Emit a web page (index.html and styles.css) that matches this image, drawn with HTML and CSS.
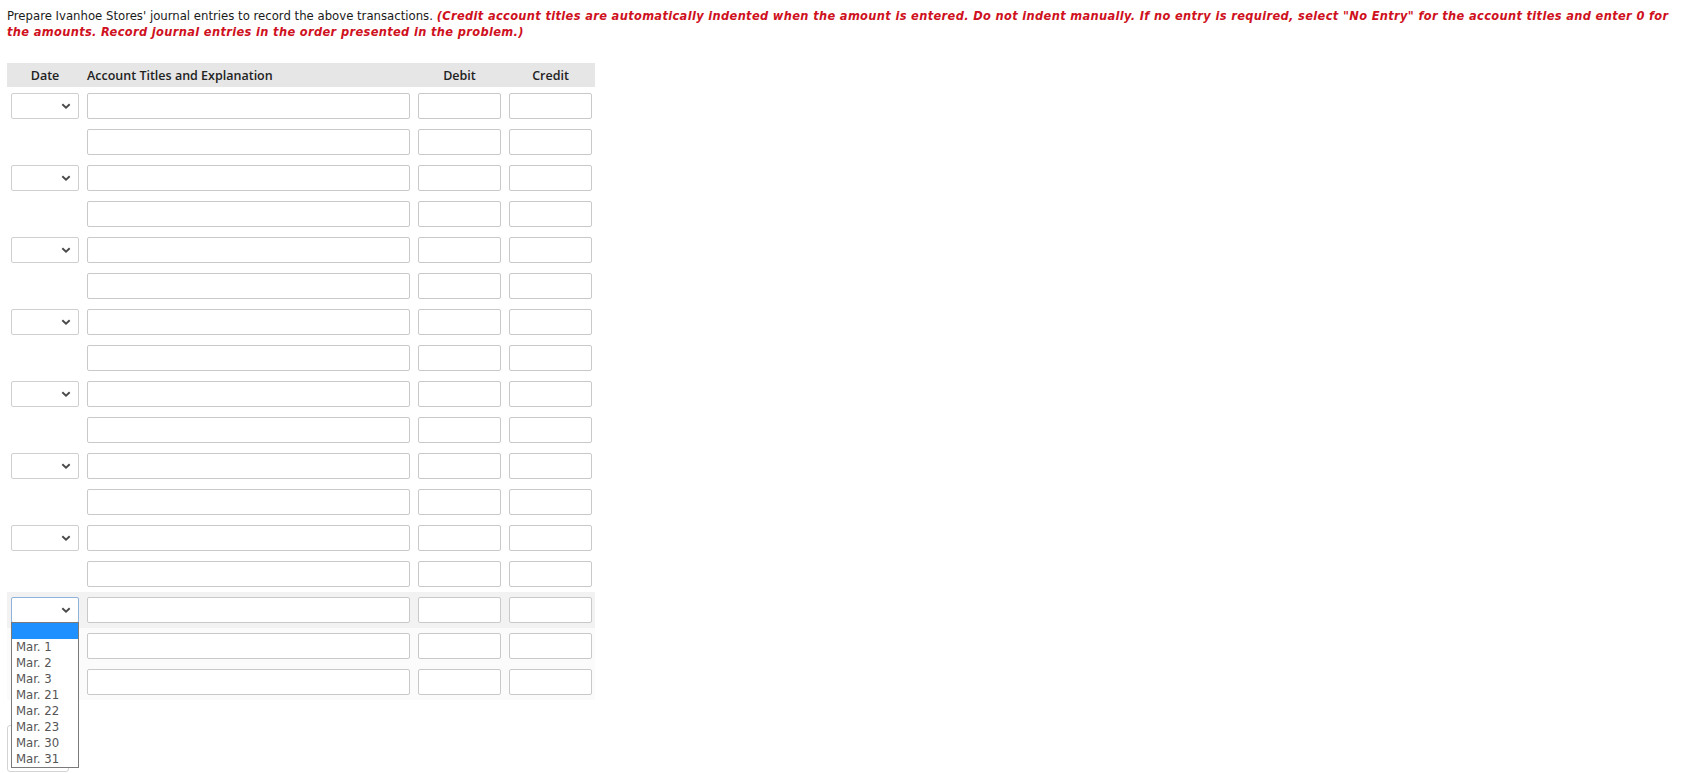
FILE: index.html
```html
<!DOCTYPE html>
<html lang="en">
<head>
    <meta charset="UTF-8" />
    <title>Journal Entries</title>
    <link rel="stylesheet" href="styles.css">
</head>
<body>
    <div class="page">
        <p class="question">Prepare Ivanhoe Stores' journal entries to record the above transactions. <em class="note">(Credit account titles are automatically indented when the amount is entered. Do not indent manually. If no entry is required, select "No Entry" for the account titles and enter 0 for the amounts. Record journal entries in the order presented in the problem.)</em></p>

        <div class="journal">
            <div class="jrow head">
                <div class="h-date">Date</div>
                <div class="h-acct">Account Titles and Explanation</div>
                <div class="h-num">Debit</div>
                <div class="h-num">Credit</div>
            </div>
            <div id="entries"></div>
        </div>

        <div class="action-btn"></div>
    </div>
    <script>
        // build the 8 journal entries (2 lines each, last one has 3)
        const entries = document.getElementById('entries');
        const chevron = '<svg class="chev" width="10" height="7" viewBox="0 0 10 7"><path d="M1.3 1.3 L5 4.8 L8.7 1.3" fill="none" stroke="#4a4a4a" stroke-width="1.9"/></svg>';
        const dates = ['', 'Mar. 1', 'Mar. 2', 'Mar. 3', 'Mar. 21', 'Mar. 22', 'Mar. 23', 'Mar. 30', 'Mar. 31'];

        for (let e = 0; e < 8; e++) {
            const group = document.createElement('div');
            group.className = 'entry' + (e === 7 ? ' active' : '');
            const lines = e === 7 ? 3 : 2;
            for (let l = 0; l < lines; l++) {
                const row = document.createElement('div');
                row.className = 'jrow' + (e === 7 && l === 0 ? ' focus' : '');
                let dateCell = '<div class="date-cell"></div>';
                if (l === 0) {
                    dateCell = '<div class="date-cell"><div class="sel' + (e === 7 ? ' open' : '') + '">' + chevron + '</div></div>';
                }
                row.innerHTML = dateCell +
                    '<input class="inp acct" type="text">' +
                    '<input class="inp num" type="text">' +
                    '<input class="inp num" type="text">';
                group.appendChild(row);
            }
            entries.appendChild(group);
        }

        // open dropdown list on the last date select
        const openSel = document.querySelector('.sel.open');
        const list = document.createElement('ul');
        list.className = 'dropdown';
        dates.forEach((d, i) => {
            const li = document.createElement('li');
            li.textContent = d;
            if (i === 0) li.className = 'hl';
            list.appendChild(li);
        });
        openSel.appendChild(list);
    </script>
</body>
</html>
```

FILE: styles.css
```css
html {
    background: #fff;
}
body {
    margin: 0;
    font-family: 'DejaVu Sans Condensed', 'DejaVu Sans', Verdana, sans-serif;
    color: #1b1b1b;
}
.page {
    padding: 0 7px;
}
.question {
    margin: 0;
    padding-top: 8px;
    font-size: 13px;
    line-height: 16px;
}
.note {
    color: #cf1020;
    font-weight: bold;
    font-style: italic;
    font-size: 12.7px;
    letter-spacing: 0.35px;
}
.journal {
    margin-top: 23px;
    width: 588px;
}
.jrow {
    display: grid;
    grid-template-columns: 68px 323px 83px 83px;
    column-gap: 8px;
    padding: 5px 3px 5px 4px;
    align-items: center;
}
.jrow.head {
    background: #e6e6e6;
    padding: 0 3px 0 4px;
    height: 24px;
    font-family: 'Open Sans', sans-serif;
    font-weight: 600;
    font-size: 12.5px;
    color: #222;
}
.h-date, .h-num {
    text-align: center;
}
#entries {
    margin-top: 1px;
}
.entry.active {
    background: #fbfbfb;
}
.jrow.focus {
    background: #f2f2f2;
}
.date-cell {
    height: 26px;
    position: relative;
}
.sel {
    box-sizing: border-box;
    height: 26px;
    background: #fff;
    border: 1px solid #cfcfcf;
    border-radius: 2px;
    position: relative;
}
.sel .chev {
    position: absolute;
    right: 7px;
    top: 9px;
}
.sel.open {
    border-color: #8fb2da;
}
.inp {
    box-sizing: border-box;
    height: 26px;
    margin: 0;
    border: 1px solid #c9c9c9;
    border-radius: 2px;
    background: #fff;
    padding: 0 4px;
    font-size: 12px;
}
.dropdown {
    position: absolute;
    left: -1px;
    top: 24px;
    width: 68px;
    box-sizing: border-box;
    margin: 0;
    padding: 0;
    list-style: none;
    background: #fff;
    border: 1px solid #7a7a7a;
    z-index: 10;
    font-size: 13px;
    color: #555;
}
.dropdown li {
    height: 16px;
    line-height: 16px;
    padding-left: 4px;
}
.dropdown li.hl {
    background: #1e90ff;
}
.action-btn {
    margin-top: 25px;
    width: 60px;
    height: 45px;
    border: 1px solid #d4d4d4;
    border-radius: 3px;
}
```
